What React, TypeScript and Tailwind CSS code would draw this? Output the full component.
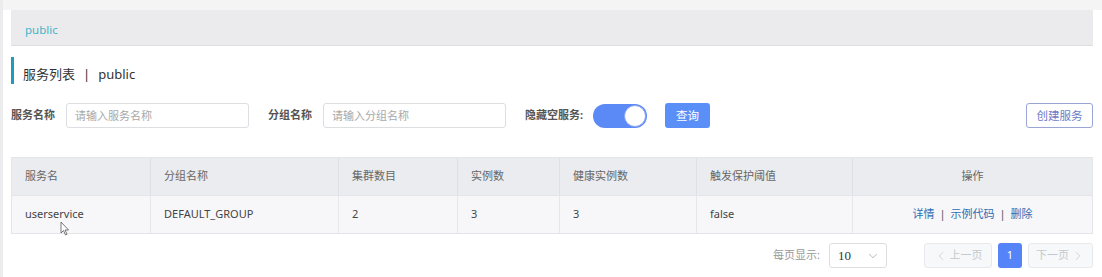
import { ChevronDown, ChevronLeft, ChevronRight } from "lucide-react";

const columns = [
  { title: "服务名", width: "w-[138px]" },
  { title: "分组名称", width: "w-[188px]" },
  { title: "集群数目", width: "w-[119px]" },
  { title: "实例数", width: "w-[102px]" },
  { title: "健康实例数", width: "w-[137px]" },
  { title: "触发保护阈值", width: "w-[156px]" },
  { title: "操作", width: "flex-1" },
];

const row = ["userservice", "DEFAULT_GROUP", "2", "3", "3", "false"];

export default function App() {
  return (
    <div
      className="relative h-[277px] w-[1102px] overflow-hidden border-l-[3px] border-[#ececee] bg-white text-[11px] text-[#333]"
      style={{ fontFamily: '"Noto Sans", "Noto Sans CJK SC", sans-serif' }}
    >
      {/* Top strip */}
      <div className="h-[10px] bg-[#f4f4f5]" />

      <div className="pl-[8px] pr-[9px]">
        {/* Namespace bar */}
        <div className="flex h-[36px] items-center border-b border-[#dedee0] bg-[#ebebed] pl-[14px] pt-[4px] text-[11.5px] text-[#45b3c8]">
          public
        </div>

        {/* Title */}
        <div className="mt-[11px] flex h-[27px] border-l-[3px] border-[#1f9bbf] pl-[9px] pt-[8px] text-[13px] leading-[18px] text-[#333]">
          服务列表<span className="mx-[8px]">|</span>public
        </div>

        {/* Filters */}
        <div className="mt-[19px] flex h-[25px] items-center">
          <span className="font-bold text-[#555]">服务名称</span>
          <input
            placeholder="请输入服务名称"
            className="ml-[11px] h-[25px] w-[183px] rounded-[3px] border border-[#dcdee2] px-[8px] text-[11px] placeholder:text-[#a8a8a8] focus:outline-none"
          />
          <span className="ml-[19px] font-bold text-[#555]">分组名称</span>
          <input
            placeholder="请输入分组名称"
            className="ml-[11px] h-[25px] w-[183px] rounded-[3px] border border-[#dcdee2] px-[8px] text-[11px] placeholder:text-[#a8a8a8] focus:outline-none"
          />
          <span className="ml-[19px] font-bold text-[#555]">隐藏空服务:</span>
          <div className="ml-[10px] flex h-[24px] w-[54px] items-center justify-end rounded-full bg-[#5b8af7] pr-[1px]">
            <div className="h-[22px] w-[22px] rounded-full border border-[#8ea6f0] bg-white" />
          </div>
          <button className="ml-[18px] h-[25px] w-[45px] rounded-[3px] bg-[#5b8ff8] text-[11.5px] text-white">
            查询
          </button>
          <button className="ml-auto h-[25px] w-[67px] rounded-[3px] border border-[#9aa5d6] bg-white text-[11.5px] text-[#6c7bc8]">
            创建服务
          </button>
        </div>

        {/* Table */}
        <div className="mt-[29px] border border-[#e4e5e8]">
          <div className="flex h-[37px] bg-[#ebecef]">
            {columns.map((c, i) => (
              <div
                key={c.title}
                className={`${c.width} flex items-center ${i > 0 ? "border-l border-[#dfe0e3]" : ""} ${
                  i === 6 ? "justify-center" : "pl-[13px]"
                } text-[#666]`}
              >
                {c.title}
              </div>
            ))}
          </div>
          <div className="flex h-[38px] border-t border-[#e4e5e8] bg-[#f7f7f9]">
            {row.map((v, i) => (
              <div
                key={i}
                className={`${columns[i].width} flex items-center pl-[13px] ${
                  i > 0 ? "border-l border-[#e6e7ea]" : ""
                } text-[#444]`}
              >
                {v}
              </div>
            ))}
            <div className="flex flex-1 items-center justify-center border-l border-[#e6e7ea] text-[#2f6db4]">
              <span>详情</span>
              <span className="mx-[5px] text-[#555]">|</span>
              <span>示例代码</span>
              <span className="mx-[5px] text-[#555]">|</span>
              <span>删除</span>
            </div>
          </div>
        </div>

        {/* Pagination */}
        <div className="mt-[9px] flex h-[25px] items-center justify-end">
          <span className="text-[#999]">每页显示:</span>
          <div className="ml-[9px] flex h-[25px] w-[58px] items-center justify-between rounded-[3px] border border-[#dcdee2] pl-[8px] pr-[6px]">
            <span className="text-[13px] text-[#333]" style={{ fontFamily: '"Liberation Serif", serif' }}>
              10
            </span>
            <ChevronDown size={14} strokeWidth={1.2} className="text-[#999]" />
          </div>
          <button className="ml-[37px] flex h-[25px] w-[68px] items-center justify-center rounded-[3px] border border-[#e8e9ec] bg-[#f7f8fa] text-[#c5c8ce]">
            <ChevronLeft size={14} strokeWidth={1.3} />
            <span className="ml-[2px]">上一页</span>
          </button>
          <button className="ml-[6px] h-[25px] w-[24px] rounded-[3px] bg-[#5584f8] text-white">1</button>
          <button className="ml-[6px] flex h-[25px] w-[65px] items-center justify-center rounded-[3px] border border-[#e8e9ec] bg-[#f7f8fa] text-[#c5c8ce]">
            <span className="mr-[2px]">下一页</span>
            <ChevronRight size={14} strokeWidth={1.3} />
          </button>
        </div>
      </div>

      {/* Mouse cursor */}
      <svg className="absolute left-[57px] top-[221px]" width="10" height="15" viewBox="0 0 10 15">
        <path d="M1 1 L1 12 L3.5 9.5 L5.5 14 L7 13.3 L5 9 L8.5 9 Z" fill="#fff" stroke="#555" strokeWidth="0.8" />
      </svg>
    </div>
  );
}
